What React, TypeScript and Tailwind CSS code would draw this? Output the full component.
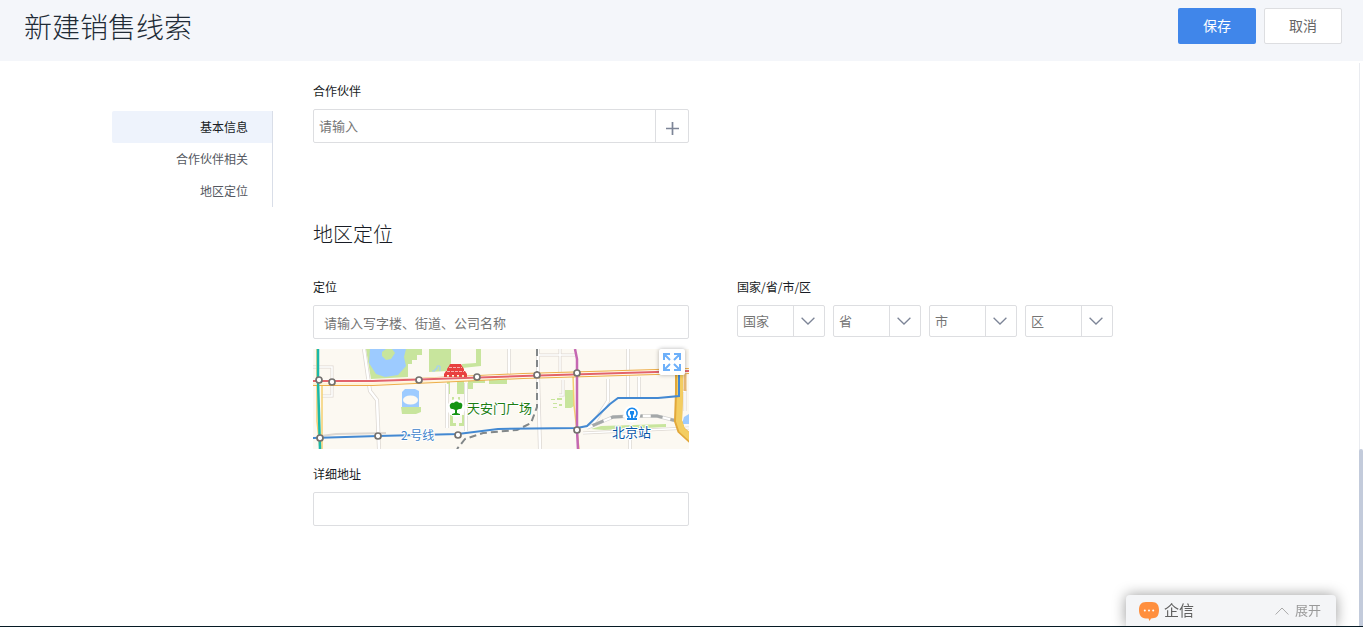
import { useState, type ReactNode } from 'react'

const SECTIONS = ['基本信息', '合作伙伴相关', '地区定位']
const REGIONS = ['国家', '省', '市', '区']

function Field({ label, htmlFor, children }: { label: string; htmlFor: string; children: ReactNode }) {
  return (
    <div className="flex flex-col gap-2.5">
      <label htmlFor={htmlFor} className="text-xs text-[#181c25]">
        {label}
      </label>
      {children}
    </div>
  )
}

function RegionSelect({ name, id }: { name: string; id: string }) {
  return (
    <div className="flex h-8 flex-1 items-stretch rounded-xs border border-[#dddee1]">
      <select
        id={id}
        aria-label={name}
        className="min-w-0 flex-1 appearance-none bg-transparent px-[5px] text-[13px] text-[#757575] outline-none"
      >
        <option>{name}</option>
      </select>
      <span className="flex w-[31px] items-center justify-center border-l border-[#dddee1] pr-0.5" aria-hidden>
        <svg width="14" height="8" viewBox="0 0 14 8" fill="none" stroke="#7d8597" strokeWidth="1.3">
          <path d="M.6.8 7 7l6.4-6.2" />
        </svg>
      </span>
    </div>
  )
}

// Estaciones de metro: centro de cada círculo
const STATIONS = [
  [6, 31],
  [19, 33],
  [106, 31],
  [164, 28],
  [224, 26],
  [264, 24],
  [7, 89],
  [65, 87],
  [145, 86],
  [264, 81],
]

function CityMap() {
  return (
    <svg
      viewBox="0 0 376 100"
      className="block w-full"
      role="img"
      aria-label="地图"
      fontFamily='"Noto Sans CJK SC", sans-serif'
      fill="none"
    >
      <rect width="376" height="100" fill="#fcf9f2" />

      {/* parques y agua */}
      <g fill="#c8e59d">
        <path d="M53 0h56v6h-5v5h-5v4h-4v13l-37 2z" />
        <path d="M116 0h22v14l-3 8-19 1z" />
        <path d="M148 0h20v17l-19 2v-4l14-1V0z" />
        <path d="M134 33h3v12h-3zM144 32h7v13h-7z" />
        <path d="M155 31h17v3h-12v6h-5zM176 30h18v5h-18z" />
        <path d="M137 77V66h3v8h3v3zM152 77V66h-3v8h-3v3z" />
        <path d="M139 48h2v3h-2zM145 48h2v3h-2z" />
        <path d="M88 58h20v5l-5 2H89zM252 41h9v16l-3 2h-6z" />
        <path d="m278 80 10-3 65-2v3l-62 3z" />
        <path d="M238 50h4v1h-4zM244 49h5v2h-5zM240 54h4v1h-4zM246 55h3v2h-3zM240 58h4v1h-4z" />
      </g>
      <g fill="#9dcbff">
        <path d="M57 0h36l-2 8 2 9-8 9-13 2-9-3-7-11z" />
        <path d="M89 43l3-3h10l4 2v16H89z" />
        <path d="M371 68l5-3v10h-7z" />
      </g>
      <path d="M119 22h3v-2h2v-3h3v5" stroke="#9dcbff" />
      <path d="m69 3 4-3h6l3 4-4 6-5 1-4-4z" fill="#c8e59d" />
      <ellipse cx="97.500" cy="51" rx="7.500" ry="4.500" fill="#fcf9f2" />

      {/* calles secundarias */}
      <g stroke="#ddd8d2" strokeWidth="4">
        <path d="m51 0 6 42 7 9 2 49" />
        <path d="M0 18h19v29H9" strokeWidth="3" />
        <path d="M134 35v44M153 34v48M196 0v27M225 0v27l2 73" />
        <path d="M315 0v48M326 28v20M317 86v14M295 30v22l-16 25" />
        <path d="M224 6h38M247 0v27M250 31v15h-4" strokeWidth="3" />
        <path d="M270 84 376 79M366 42h6v20" strokeWidth="3" />
        <path d="m8 87 15-2 50-1" strokeWidth="2" />
      </g>
      <g stroke="#fff" strokeWidth="2.500">
        <path d="m51 0 6 42 7 9 2 49" />
        <path d="M134 35v44M153 34v48M196 0v27M225 0v27l2 73" />
        <path d="M315 0v48M326 28v20M317 86v14M295 30v22l-16 25" />
        <path d="M224 6h38M247 0v27M250 31v15h-4M0 18h19v29H9" strokeWidth="1.500" />
        <path d="M270 84 376 79M366 42h6v20" strokeWidth="1.500" />
      </g>

      {/* ferrocarril */}
      <path d="M224 0v58l-6 16-14 7-34 3-18 6-8 10" stroke="#828789" strokeWidth="2" strokeDasharray="7 4" />
      <path d="m274 79 26-11 20-1h24l24 6" stroke="#d2d2d0" strokeWidth="3.500" />
      <path d="m274 79 26-11 20-1h24l24 6" stroke="#fff" strokeWidth="2" />
      <path d="m274 79 26-11 20-1h24l24 6" stroke="#a4a8a9" strokeWidth="3" strokeDasharray="12 8" strokeDashoffset="14" />

      {/* avenidas */}
      <path d="M4 0v72l3 28M9 34v66M260 26l1 30 5 44" stroke="#f4cf72" strokeWidth="1.500" />
      <path d="M0 34h60l150-7 166-5" stroke="#edae4a" strokeWidth="6" />
      <path d="M0 34h60l150-7 166-5" stroke="#fff3d6" strokeWidth="4" />
      <path d="M366 25v18l-1 29 3 9 11 10" stroke="#e2a83b" strokeWidth="8" />
      <path d="M367 25v18l-1 29 3 9 11 10" stroke="#f3cd61" strokeWidth="6" />
      <path d="M372 24v18" stroke="#e5b675" strokeWidth="3" />

      {/* líneas de metro */}
      <path d="M0 32h60l150-5 166-5" stroke="#fff" strokeWidth="3" />
      <path d="M0 32h60l150-5 166-5" stroke="#e2636b" strokeWidth="2" />
      <path d="M5 0v31l2 69" stroke="#1ab9a9" strokeWidth="2.500" />
      <path d="M262 0l2 10v71l1 19" stroke="#c568b2" strokeWidth="2.500" />
      <path d="m0 89 65-2 80-2 40-5 79-1 10-2 23-22 8-6h40l21-2V26" stroke="#4389d2" strokeWidth="2" />

      {STATIONS.map(([cx, cy]) => (
        <circle key={`${cx}-${cy}`} cx={cx} cy={cy} r="3" fill="#fff" stroke="#74716e" strokeWidth="1.700" />
      ))}

      {/* Tiananmén */}
      <g fill="#e8413f">
        <path d="M137 15h11l1 2 2 3v2h-17v-2l2-3z" />
        <path d="M133 22h19l2 3v3h-3v-2h-2v2h-3v-2h-2v2h-3v-2h-2v2h-3v-2h-2v2h-3v-3z" />
      </g>
      <path d="M136 18.500h13M134 22.500h17" stroke="#fff" strokeWidth=".6" strokeDasharray="3 1" />
      <circle cx="143" cy="59" r="9" fill="#fff" />
      <path
        d="M137 58c-1-3 2-5 4-4 1-2 4-2 5 0 3-1 4 2 3 4 0 2-2 2-3 2l-2 1v3l3 1v1h-8v-1l3-1v-3l-2-1c-1 0-3 0-3-2z"
        fill="#159414"
      />

      {/* estación de trenes */}
      <circle cx="319" cy="65" r="8.500" fill="#fff" />
      <path d="M316.500 68.500a5 5 0 1 1 5 0" stroke="#1687ed" strokeWidth="1.500" />
      <path d="M317 62h4v3l-1 1v3h4v2h-10v-2h4v-3l-1-1z" fill="#1687ed" />

      <g stroke="#fff" strokeWidth="2" paintOrder="stroke" strokeLinejoin="round">
        <text x="154" y="64" fontSize="13" fontWeight="400" fill="#1c7d12">
          天安门广场
        </text>
        <text x="88" y="91" fontSize="12" fontWeight="400" fill="#4084cb">
          2 号线
        </text>
        <text x="299" y="88" fontSize="13" fontWeight="400" fill="#0856a8">
          北京站
        </text>
      </g>
    </svg>
  )
}

function ExpandIcon() {
  return (
    <svg width="18" height="18" viewBox="0 0 18 18" fill="none" stroke="#6db0fa" strokeWidth="2" aria-hidden>
      <path d="M1 7V1h6M1.500 1.500 7 7M11 1h6v6M16.500 1.500 11 7M1 11v6h6M1.500 16.500 7 11M17 11v6h-6M16.500 16.500 11 11" />
    </svg>
  )
}

export default function App() {
  const [active, setActive] = useState(SECTIONS[0])

  return (
    <div className="flex min-h-screen flex-col border-b border-[#061a24] bg-white font-['Noto_Sans_CJK_SC',sans-serif]">
      <header className="flex h-[61px] items-start justify-between bg-[#f4f6fa] pr-[21px] pl-6">
        <h1 className="pt-1.5 text-[28px] leading-10 font-light text-[#212b36]">新建销售线索</h1>
        <div className="flex gap-2 pt-2">
          <button className="h-9 w-[78px] rounded-xs bg-[#4086ea] pb-0.5 text-sm text-white">保存</button>
          <button className="h-9 w-[78px] rounded-xs border border-[#dddee1] bg-white pb-0.5 text-sm text-[#666]">
            取消
          </button>
        </div>
      </header>

      <div className="flex flex-1 items-stretch">
        <main className="flex flex-1 items-start gap-10 pb-24 pl-28">
          <nav className="mt-[50px] w-[161px] flex-none border-r border-[#d9dee8]">
            {SECTIONS.map((s) => (
              <a
                key={s}
                href="#"
                onClick={() => setActive(s)}
                className={`flex h-8 items-center justify-end rounded-l-xs pr-6 text-xs ${
                  s === active ? 'bg-[#eef3fc] text-[#181c25]' : 'text-[#545861]'
                }`}
              >
                {s}
              </a>
            ))}
          </nav>

          <form className="w-full max-w-[800px] pt-[22px]">
            <section className="grid grid-cols-2 gap-12">
              <Field label="合作伙伴" htmlFor="partner">
                <div className="flex h-[34px] rounded-xs border border-[#dddee1]">
                  <input
                    id="partner"
                    placeholder="请输入"
                    className="min-w-0 flex-1 px-[5px] text-[13px] outline-none placeholder:text-[#757575]"
                  />
                  <button
                    type="button"
                    aria-label="添加"
                    className="flex w-[33px] items-center justify-center border-l border-[#dddee1] pt-1"
                  >
                    <svg width="13" height="13" viewBox="0 0 13 13" stroke="#7d8597" strokeWidth="1.700">
                      <path d="M0 6.500h13M6.500 0v13" />
                    </svg>
                  </button>
                </div>
              </Field>
            </section>

            <h2 className="mt-[77px] text-xl leading-7 font-light text-[#181c25]">地区定位</h2>

            <section className="mt-[31px] grid grid-cols-2 items-start gap-12">
              <div className="flex flex-col gap-[17px]">
                <Field label="定位" htmlFor="location">
                  <input
                    id="location"
                    placeholder="请输入写字楼、街道、公司名称"
                    className="h-[34px] rounded-xs border border-[#dddee1] px-2.5 text-[13px] outline-none placeholder:text-[#757575]"
                  />
                  <div className="relative">
                    <CityMap />
                    <button
                      type="button"
                      aria-label="放大地图"
                      className="absolute top-0 right-1 flex size-[26px] items-center justify-center rounded-xs bg-white shadow-[0_0_4px_rgba(0,0,0,0.3)]"
                    >
                      <ExpandIcon />
                    </button>
                  </div>
                </Field>
                <Field label="详细地址" htmlFor="address">
                  <input
                    id="address"
                    className="h-[34px] rounded-xs border border-[#dddee1] px-2.5 text-[13px] outline-none"
                  />
                </Field>
              </div>

              <Field label="国家/省/市/区" htmlFor="region-0">
                <div className="flex gap-2">
                  {REGIONS.map((r, i) => (
                    <RegionSelect key={r} name={r} id={`region-${i}`} />
                  ))}
                </div>
              </Field>
            </section>
          </form>
        </main>

        {/* barra de desplazamiento */}
        <div className="mt-0.5 flex w-1 flex-none flex-col justify-end border-l border-[#e9ebf0]" aria-hidden>
          <div className="-ml-px h-[177px] rounded-t-xs bg-[#c3cbdb]" />
        </div>
      </div>

      <button className="fixed right-[27px] bottom-px flex h-[31px] w-[210px] items-center rounded-t-sm bg-[#f4f5f7] pr-[15px] pl-[13px] shadow-[0_0_14px_rgba(0,0,0,0.4)]">
        <svg width="20" height="20" viewBox="0 0 20 20" aria-hidden>
          <path d="M7 1h6c5 0 7 3 7 8s-2 8-5 8l-3 .5-1.500 2.500-1-2.500H7c-5-.5-7-3.500-7-8.500s2-8 7-8z" fill="#ff8f3e" />
          <g fill="#fff">
            <circle cx="5.800" cy="9.500" r="1" />
            <circle cx="10" cy="9.500" r="1" />
            <circle cx="14.200" cy="9.500" r="1" />
          </g>
        </svg>
        <span className="ml-[5px] text-[15px] text-[#606060]">企信</span>
        <svg className="ml-auto" width="14" height="8" viewBox="0 0 14 8" fill="none" stroke="#aaa" aria-hidden>
          <path d="M.6 7.500 7 1l6.400 6.500" />
        </svg>
        <span className="ml-1.5 pb-0.5 text-[13px] text-[#999]">展开</span>
      </button>
    </div>
  )
}
